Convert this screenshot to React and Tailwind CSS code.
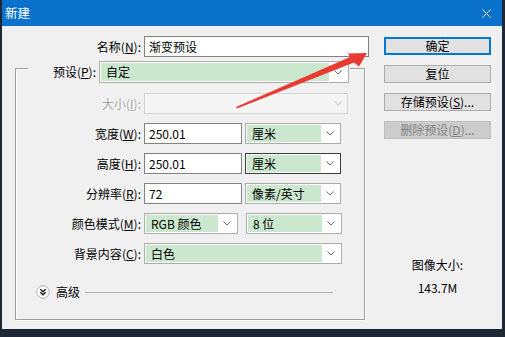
import React from "react";

const Chevron = ({ color = "#6f6f6f" }) => (
  <svg width="8" height="5" viewBox="0 0 8 5">
    <polyline
      points="0.5,0.5 4,4 7.5,0.5"
      fill="none"
      stroke={color}
      strokeWidth="1"
    />
  </svg>
);

const Label = ({ text, k, width = "w-[125px]", disabled }) => (
  <div
    className={`${width} shrink-0 text-right ${
      disabled ? "text-[#a3a3a3] [text-shadow:1px_1px_0_#ffffff]" : ""
    }`}
  >
    {text}(<u>{k}</u>):
  </div>
);

const Combo = ({ value, width, dark, height = "h-[21px]" }) => (
  <div
    className={`${width} ${height} ml-[3px] flex border bg-white p-[1px] ${
      dark ? "border-[#3c3c3c]" : "border-[#acacac]"
    }`}
  >
    <div className="flex-1 bg-[#cbe8cf] flex items-center pl-[5px]">
      {value}
    </div>
    <div className="w-[18px] flex items-center justify-center">
      <Chevron />
    </div>
  </div>
);

const Field = ({ value, width }) => (
  <div
    className={`${width} h-[21px] ml-[3px] flex items-center border border-[#828282] bg-white pl-[4px]`}
  >
    {value}
  </div>
);

const Button = ({ children, primary, disabled }) => (
  <div
    className={`h-[18px] flex items-center justify-center border ${
      primary
        ? "border-[#0078d7] shadow-[inset_0_0_0_1px_#0078d7] bg-[#e1e1e1]"
        : disabled
        ? "border-[#bfbfbf] bg-[#cccccc] text-[#838383]"
        : "border-[#adadad] bg-[#e1e1e1]"
    }`}
  >
    {children}
  </div>
);

export default function App() {
  return (
    <div className="relative w-[505px] h-[337px] overflow-hidden bg-[#1d2735] font-['Noto_Sans_CJK_SC',sans-serif] text-[12px] leading-[16px] text-black">
      <div className="ml-[2px] w-[500px] h-[329px] flex flex-col bg-[#f0f0f0]">
        {/* title bar */}
        <div className="h-[26px] shrink-0 bg-[#0a72cb] flex items-center justify-between pl-[3px] pr-[11px] text-white">
          <span className="text-[12.5px]">新建</span>
          <svg width="9" height="9" viewBox="0 0 9 9">
            <path d="M0.5 0.5 L8.5 8.5 M8.5 0.5 L0.5 8.5" stroke="#ffffff" strokeWidth="1" />
          </svg>
        </div>

        <div className="flex-1 flex">
          {/* form side */}
          <div className="w-[370px] pt-[10px]">
            <div className="flex items-center h-[21px]">
              <Label text="名称" k="N" width="w-[139px]" />
              <Field value="渐变预设" width="w-[225px]" />
            </div>

            <div className="mt-[11px] ml-[13px] w-[350px] h-[252px] border border-[#a0a0a0] shadow-[inset_1px_1px_0_#ffffff,1px_1px_0_#ffffff]">
              <div className="-mt-[8px] ml-[12px] w-[322px] h-[22px] flex items-center bg-[#f0f0f0]">
                <Label text="预设" k="P" width="w-[68px]" />
                <Combo value="自定" width="w-[250px]" height="h-[22px]" />
              </div>

              <div className="mt-[10px] flex items-center h-[21px]">
                <Label text="大小" k="I" disabled />
                <div className="w-[204px] h-[21px] ml-[3px] flex border border-[#d4d4d4] bg-[#f5f5f5]">
                  <div className="flex-1" />
                  <div className="w-[18px] flex items-center justify-center">
                    <Chevron color="#bdbdbd" />
                  </div>
                </div>
              </div>

              <div className="mt-[9px] flex items-center h-[21px]">
                <Label text="宽度" k="W" />
                <Field value="250.01" width="w-[98px]" />
                <Combo value="厘米" width="w-[96px]" />
              </div>

              <div className="mt-[9px] flex items-center h-[21px]">
                <Label text="高度" k="H" />
                <Field value="250.01" width="w-[98px]" />
                <Combo value="厘米" width="w-[96px]" dark />
              </div>

              <div className="mt-[9px] flex items-center h-[21px]">
                <Label text="分辨率" k="R" />
                <Field value="72" width="w-[98px]" />
                <Combo value="像素/英寸" width="w-[96px]" />
              </div>

              <div className="mt-[9px] flex items-center h-[21px]">
                <Label text="颜色模式" k="M" />
                <Combo value="RGB 颜色" width="w-[94px]" />
                <div className="w-[5px]" />
                <Combo value="8 位" width="w-[96px]" />
              </div>

              <div className="mt-[9px] flex items-center h-[21px]">
                <Label text="背景内容" k="C" />
                <Combo value="白色" width="w-[198px]" />
              </div>

              <div className="mt-[21px] ml-[20px] mr-[31px] h-[14px] flex items-center">
                <svg width="14" height="14" viewBox="0 0 14 14" className="shrink-0">
                  <circle cx="7" cy="7" r="6.3" fill="#fafafa" stroke="#b3b3b3" strokeWidth="1" />
                  <polyline points="4.3,4.2 7,6.7 9.7,4.2" fill="none" stroke="#1e1e1e" strokeWidth="1.4" />
                  <polyline points="4.3,7.3 7,9.8 9.7,7.3" fill="none" stroke="#1e1e1e" strokeWidth="1.4" />
                </svg>
                <span className="ml-[6px]">高级</span>
                <div className="flex-1 ml-[5px] border-t border-[#b4b4b4]" />
              </div>
            </div>
          </div>

          {/* buttons side */}
          <div className="ml-[12px] w-[107px] pt-[11px] flex flex-col">
            <Button primary>确定</Button>
            <div className="mt-[10px]">
              <Button>复位</Button>
            </div>
            <div className="mt-[10px]">
              <Button>
                存储预设(<u>S</u>)...
              </Button>
            </div>
            <div className="mt-[10px]">
              <Button disabled>
                删除预设(<u>D</u>)...
              </Button>
            </div>
            <div className="mt-[118px] text-center">图像大小:</div>
            <div className="mt-[7px] text-center">143.7M</div>
          </div>
        </div>
      </div>

      {/* annotation arrow */}
      <svg
        className="absolute inset-0 pointer-events-none"
        width="505"
        height="337"
        viewBox="0 0 505 337"
      >
        <polygon
          points="236,107 350,57 348,53.5 367,53 359,66.5 354,62.5 237,108.5"
          fill="#e83a30"
        />
      </svg>
    </div>
  );
}
